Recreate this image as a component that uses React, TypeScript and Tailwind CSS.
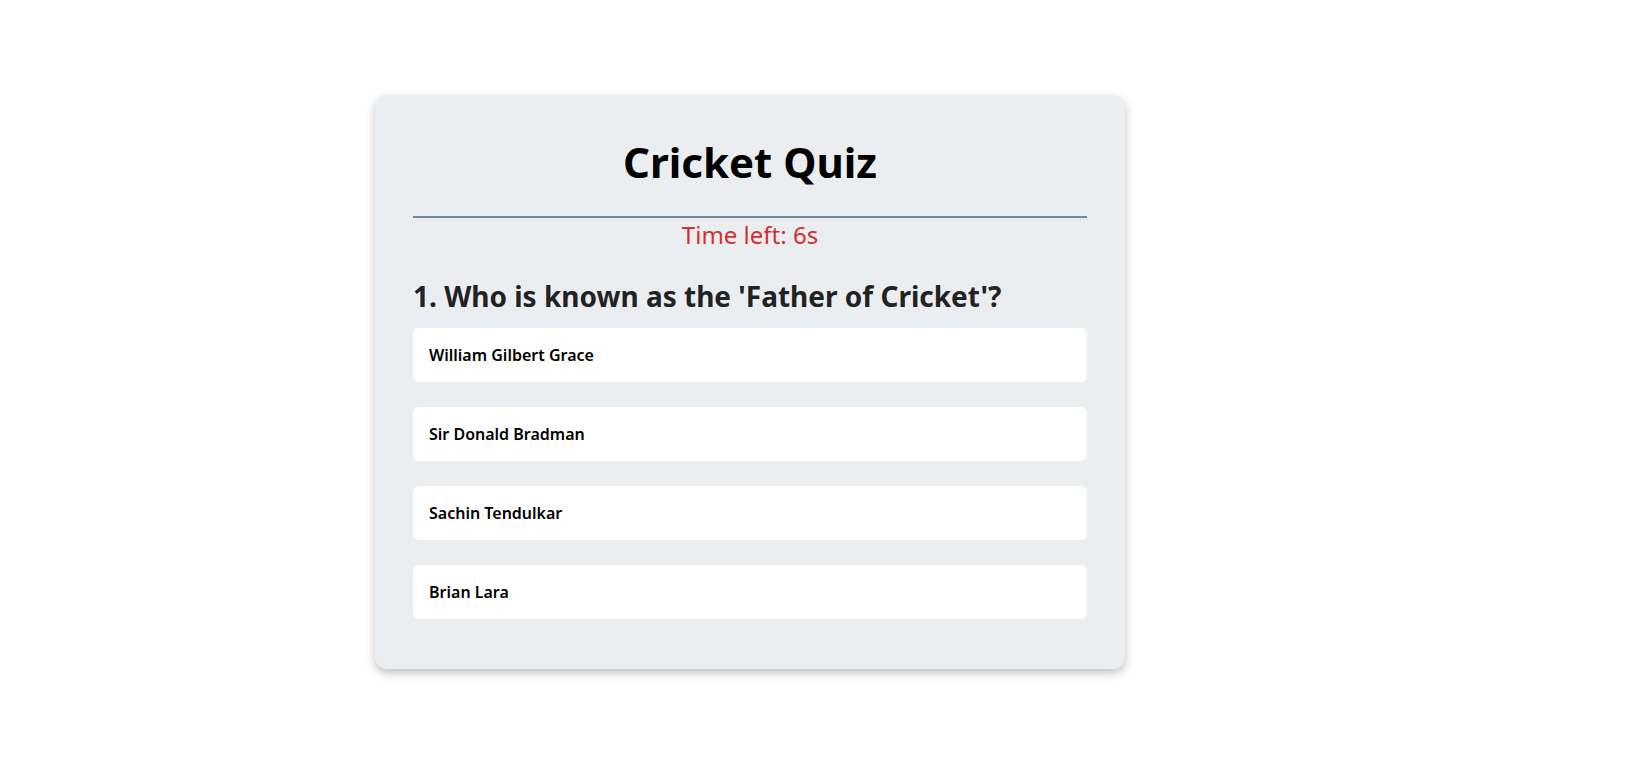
import React from "react";

const options = ["William Gilbert Grace", "Sir Donald Bradman", "Sachin Tendulkar", "Brian Lara"];

export default function App() {
  return (
    <div className="min-h-screen bg-white pt-[95px] pl-[375px]" style={{ fontFamily: '"Noto Sans", "Open Sans", sans-serif' }}>
      <div className="w-[750px] bg-[#ebeef1] rounded-xl shadow-[0_4px_10px_rgba(0,0,0,0.25)] px-[38px] pt-[35px] pb-[50px]">
        <h1 className="text-center text-[42px] font-bold text-black leading-[64px]">Cricket Quiz</h1>
        <div className="mt-[22px] h-[2px] bg-[#778899]" />
        <div className="text-center text-[24px] text-[#d32f2f] leading-[30px] mt-[2px]">Time left: 6s</div>
        <h2 className="mt-[26px] text-[28px] font-bold text-[#222] leading-[40px]">1. Who is known as the 'Father of Cricket'?</h2>
        <div className="mt-[12px] flex flex-col gap-[25px]">
          {options.map((o) => (
            <div key={o} className="bg-white rounded-md h-[54px] flex items-center px-4 text-[16px] font-semibold text-black">
              {o}
            </div>
          ))}
        </div>
      </div>
    </div>
  );
}
